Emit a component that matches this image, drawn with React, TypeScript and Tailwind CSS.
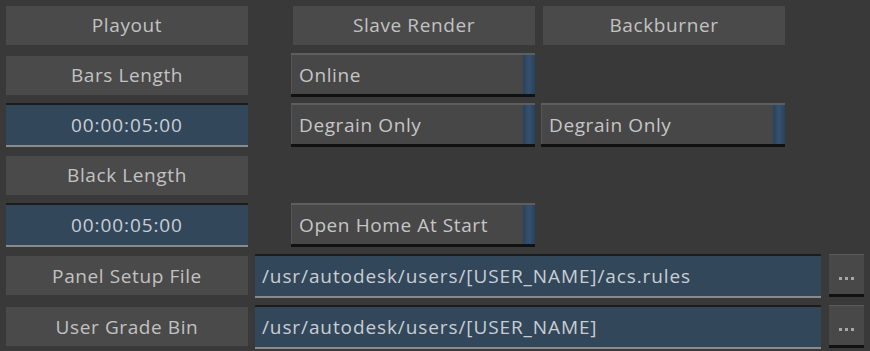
const font = { fontFamily: '"Open Sans", "DejaVu Sans", sans-serif' };

function Label({ text, w = "w-[242px]" }: { text: string; w?: string }) {
  return (
    <div
      className={`${w} h-[39px] bg-[#4a4a4a] flex items-center justify-center pt-[1px] text-[19px] tracking-[0.6px] text-[#c2c2c2]`}
    >
      {text}
    </div>
  );
}

function Field({ text, w, center = false }: { text: string; w: string; center?: boolean }) {
  return (
    <div
      className={`${w} h-[44px] bg-[#33475b] border-t-2 border-t-[#1c1c1c] border-b-2 border-b-[#8a8a8a] flex items-center pt-[1px] text-[19px] tracking-[0.9px] text-[#c9ced4] ${center ? "justify-center" : "pl-[7px]"}`}
    >
      {text}
    </div>
  );
}

function Dropdown({ text }: { text: string }) {
  return (
    <div className="w-[244px] h-[44px] flex border-t-2 border-t-[#5e5e5e] border-b-[3px] border-b-[#111111] bg-[#474747]">
      <div className="flex-1 flex items-center pl-[7px] pt-[1px] text-[19px] tracking-[0.6px] text-[#c6c6c6] border-l border-l-[#555555]">
        {text}
      </div>
      <div className="w-[12px] bg-gradient-to-r from-[#29425c] via-[#35516f] to-[#29425c]" />
    </div>
  );
}

function DotsButton() {
  return (
    <div className="w-[35px] h-[43px] bg-[#484848] border-t border-t-[#5a5a5a] border-b-[3px] border-b-[#111111] flex items-center justify-center gap-[3px] pt-[8px]">
      <span className="w-[3px] h-[3px] bg-[#a8a8a8]" />
      <span className="w-[3px] h-[3px] bg-[#a8a8a8]" />
      <span className="w-[3px] h-[3px] bg-[#a8a8a8]" />
    </div>
  );
}

export default function App() {
  return (
    <div className="w-[870px] h-[351px] bg-[#393939] overflow-hidden" style={font}>
      <div className="flex flex-col">
        {/* row 1 */}
        <div className="h-[50px] flex items-center pl-[6px]">
          <Label text="Playout" />
          <div className="ml-[45px]">
            <Label text="Slave Render" />
          </div>
          <div className="ml-[8px]">
            <Label text="Backburner" />
          </div>
        </div>
        {/* row 2 */}
        <div className="h-[50px] flex items-center pl-[6px]">
          <Label text="Bars Length" />
          <div className="ml-[43px]">
            <Dropdown text="Online" />
          </div>
        </div>
        {/* row 3 */}
        <div className="h-[50px] flex items-center pl-[6px]">
          <Field text="00:00:05:00" w="w-[242px]" center />
          <div className="ml-[43px]">
            <Dropdown text="Degrain Only" />
          </div>
          <div className="ml-[6px]">
            <Dropdown text="Degrain Only" />
          </div>
        </div>
        {/* row 4 */}
        <div className="h-[50px] flex items-center pl-[6px]">
          <Label text="Black Length" />
        </div>
        {/* row 5 */}
        <div className="h-[50px] flex items-center pl-[6px]">
          <Field text="00:00:05:00" w="w-[242px]" center />
          <div className="ml-[43px]">
            <Dropdown text="Open Home At Start" />
          </div>
        </div>
        {/* row 6 */}
        <div className="h-[51px] flex items-center pl-[6px]">
          <Label text="Panel Setup File" />
          <div className="ml-[7px]">
            <Field text="/usr/autodesk/users/[USER_NAME]/acs.rules" w="w-[566px]" />
          </div>
          <div className="ml-[8px]">
            <DotsButton />
          </div>
        </div>
        {/* row 7 */}
        <div className="h-[51px] flex items-center pl-[6px]">
          <Label text="User Grade Bin" />
          <div className="ml-[7px]">
            <Field text="/usr/autodesk/users/[USER_NAME]" w="w-[566px]" />
          </div>
          <div className="ml-[8px]">
            <DotsButton />
          </div>
        </div>
      </div>
    </div>
  );
}
